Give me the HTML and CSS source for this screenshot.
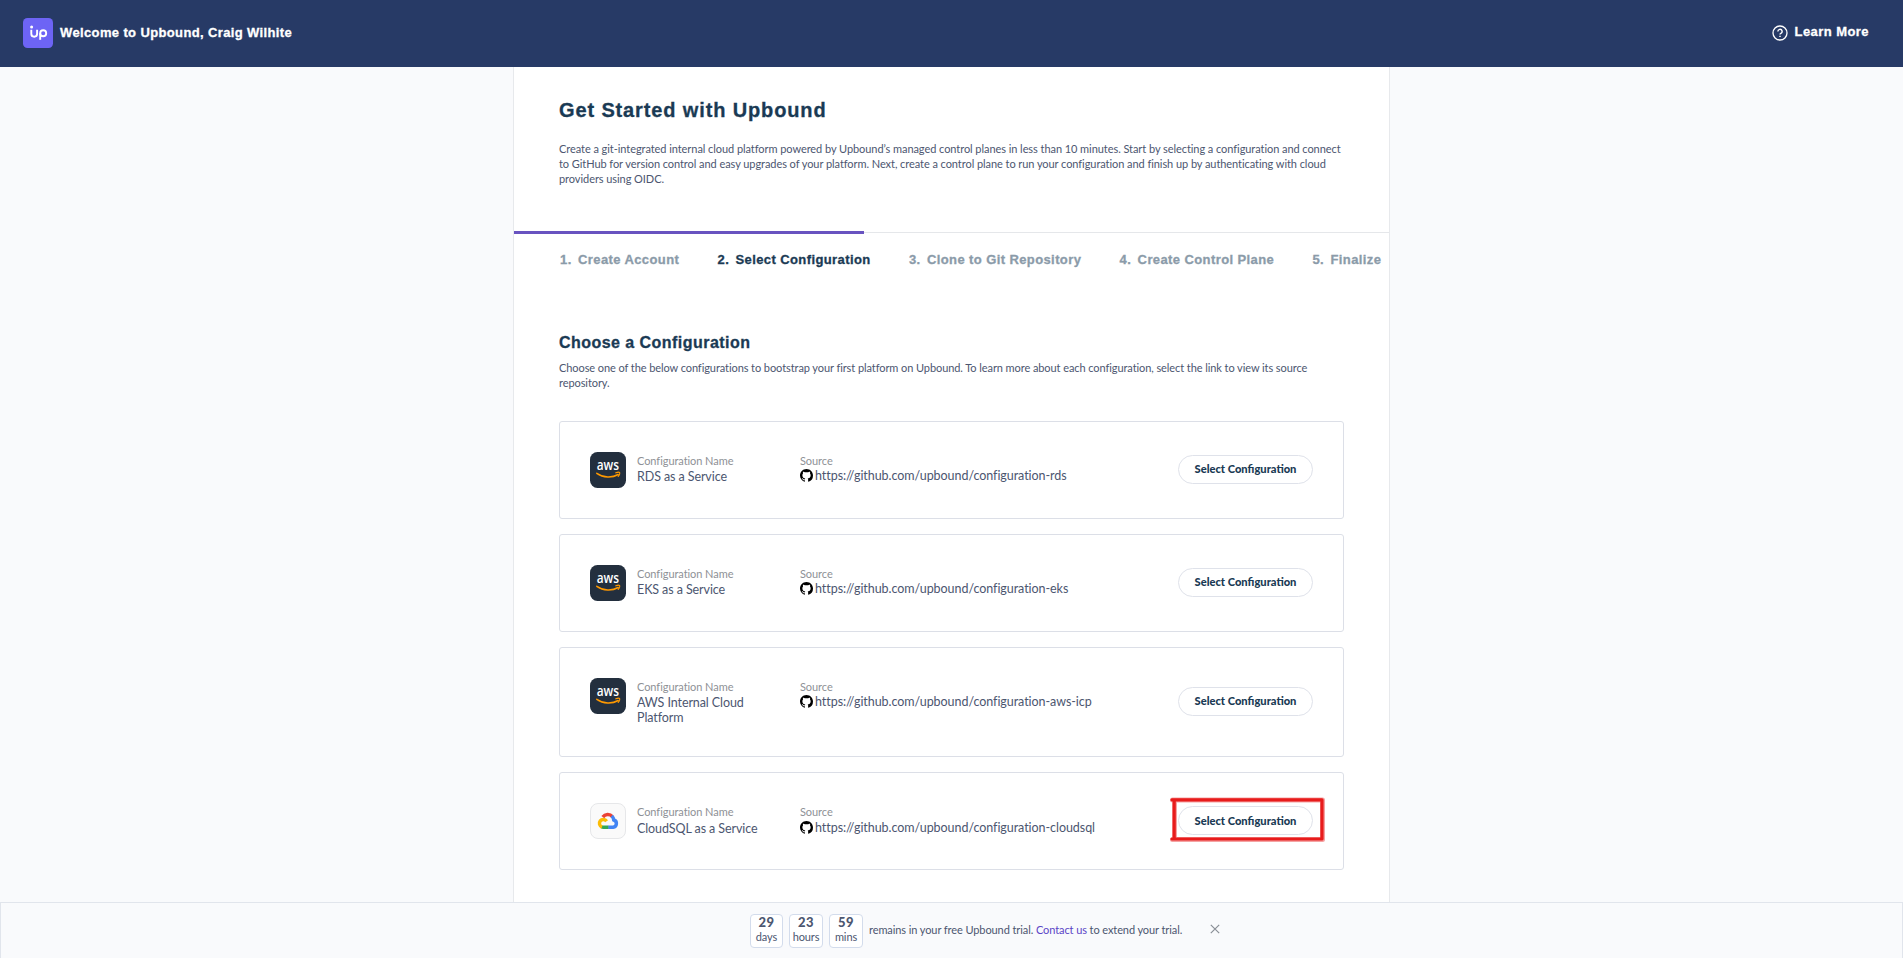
FILE: index.html
```html
<!DOCTYPE html>
<html lang="en">
<head>
<meta charset="utf-8">
<title>Get Started with Upbound</title>
<link rel="stylesheet" href="styles.css">
</head>
<body>
<svg class="defs" width="0" height="0">
  <symbol id="github" viewBox="0 0 16 16"><path d="M8 0C3.58 0 0 3.58 0 8c0 3.54 2.29 6.53 5.47 7.59.4.07.55-.17.55-.38 0-.19-.01-.82-.01-1.49-2.01.37-2.53-.49-2.69-.94-.09-.23-.48-.94-.82-1.13-.28-.15-.68-.52-.01-.53.63-.01 1.08.58 1.23.82.72 1.21 1.87.87 2.33.66.07-.52.28-.87.51-1.07-1.78-.2-3.64-.89-3.64-3.95 0-.87.31-1.59.82-2.15-.08-.2-.36-1.02.08-2.12 0 0 .67-.21 2.2.82.64-.18 1.32-.27 2-.27s1.36.09 2 .27c1.53-1.04 2.2-.82 2.2-.82.44 1.1.16 1.92.08 2.12.51.56.82 1.27.82 2.15 0 3.07-1.87 3.75-3.65 3.95.29.25.54.73.54 1.48 0 1.07-.01 1.93-.01 2.2 0 .21.15.46.55.38A8.01 8.01 0 0 0 16 8c0-4.42-3.58-8-8-8z"/></symbol>
  <symbol id="aws" viewBox="0 0 36 36">
    <rect width="36" height="36" rx="7.5" fill="#232f3e"/>
    <path d="M6.800 21.300c6.500 4.600 15.300 4.700 21.400 1.200" fill="none" stroke="#f90" stroke-width="1.500" stroke-linecap="round"/>
    <path d="M25.800 20.800c1.600-.6 3.400-.7 3.800-.2s-.2 2.500-1.400 3.700" fill="none" stroke="#f90" stroke-width="1.200" stroke-linecap="round"/>
  </symbol>
</svg>

<header class="topbar">
  <div class="brand">
    <svg class="logo" width="30" height="30" viewBox="0 0 30 30">
      <rect width="30" height="30" rx="4.500" fill="#6d64f5"/>
      <g fill="none" stroke="#fff" stroke-width="1.900">
        <path d="M8.300 11.800v4a2.900 2.900 0 0 0 5.800 0v-4"/>
        <path d="M17.200 21.800v-6.600"/><circle cx="20.200" cy="15.300" r="3"/>
      </g>
      <circle cx="8.600" cy="8.900" r="1.500" fill="#fff"/>
    </svg>
    <span class="heavy welcome">Welcome to Upbound, Craig Wilhite</span>
  </div>
  <a class="learn">
    <svg width="16" height="16" viewBox="0 0 16 16" fill="none" stroke="#fff"><circle cx="8" cy="8" r="7" stroke-width="1.300"/><path d="M5.900 6.500a2.100 2.100 0 1 1 3 1.800c-.6.3-.9.600-.9 1.200" stroke-width="1.400"/><path d="M8 10.700v1.300" stroke-width="1.500"/></svg>
    <span class="heavy learn-text">Learn More</span>
  </a>
</header>

<main class="panel">
  <section class="intro">
    <h1 class="heavy">Get Started with Upbound</h1>
    <p class="copy">Create a git-integrated internal cloud platform powered by Upbound’s managed control planes in less than 10 minutes. Start by selecting a configuration and connect<br>to GitHub for version control and easy upgrades of your platform. Next, create a control plane to run your configuration and finish up by authenticating with cloud<br>providers using OIDC.</p>
  </section>
  <div class="progress"><div class="progress-fill"></div></div>
  <ol class="steps heavy">
    <li><span>1.</span>Create Account</li>
    <li class="active"><span>2.</span>Select Configuration</li>
    <li><span>3.</span>Clone to Git Repository</li>
    <li><span>4.</span>Create Control Plane</li>
    <li><span>5.</span>Finalize</li>
  </ol>
  <section class="choose">
    <h2 class="heavy">Choose a Configuration</h2>
    <p class="copy">Choose one of the below configurations to bootstrap your first platform on Upbound. To learn more about each configuration, select the link to view its source<br>repository.</p>
    <div class="cards">
      <article class="card">
        <svg class="icon" viewBox="0 0 36 36"><use href="#aws"/><text x="6.700" y="18.300" class="aws-word" textLength="22.300" lengthAdjust="spacingAndGlyphs">aws</text></svg>
        <div class="name"><small>Configuration Name</small><span>RDS as a Service</span></div>
        <div class="source"><small>Source</small><a><svg class="gh"><use href="#github"/></svg>https://github.com/upbound/configuration-rds</a></div>
        <button>Select Configuration</button>
      </article>
      <article class="card">
        <svg class="icon" viewBox="0 0 36 36"><use href="#aws"/><text x="6.700" y="18.300" class="aws-word" textLength="22.300" lengthAdjust="spacingAndGlyphs">aws</text></svg>
        <div class="name"><small>Configuration Name</small><span>EKS as a Service</span></div>
        <div class="source"><small>Source</small><a><svg class="gh"><use href="#github"/></svg>https://github.com/upbound/configuration-eks</a></div>
        <button>Select Configuration</button>
      </article>
      <article class="card tall">
        <svg class="icon" viewBox="0 0 36 36"><use href="#aws"/><text x="6.700" y="18.300" class="aws-word" textLength="22.300" lengthAdjust="spacingAndGlyphs">aws</text></svg>
        <div class="name"><small>Configuration Name</small><span>AWS Internal Cloud<br>Platform</span></div>
        <div class="source"><small>Source</small><a><svg class="gh"><use href="#github"/></svg>https://github.com/upbound/configuration-aws-icp</a></div>
        <button>Select Configuration</button>
      </article>
      <article class="card last">
        <svg class="icon" viewBox="0 0 36 36">
          <rect x=".5" y=".5" width="35" height="35" rx="7.500" fill="#fafafa" stroke="#e6e7e9"/>
          <g fill="none" stroke-width="3.500">
            <path d="M12.800 14.100a6.200 6.200 0 0 1 9.600-.5" stroke="#ea4335"/>
            <path d="M21.700 13a6 6 0 0 1 2.100 4 3.700 3.700 0 0 1-.7 7.200h-5" stroke="#4285f4"/>
            <path d="M18.300 24.200h-4.800c-.8 0-1.500-.2-2.100-.6" stroke="#34a853"/>
            <path d="M12 24a3.900 3.900 0 1 1 4.600-5.800" stroke="#fbbc05"/>
          </g>
        </svg>
        <div class="name"><small>Configuration Name</small><span>CloudSQL as a Service</span></div>
        <div class="source"><small>Source</small><a><svg class="gh"><use href="#github"/></svg>https://github.com/upbound/configuration-cloudsql</a></div>
        <div class="action"><button>Select Configuration</button>
          <svg class="highlight" width="156" height="46" viewBox="0 0 156 46" fill="none" stroke-linecap="round" stroke-linejoin="round"><path d="M2.500 3H152.500V42.500H2.500M4.500 3V42.500" stroke="#f5a3a3" stroke-width="5"/><path d="M2 2.800H152V42H2M4.200 3V42" stroke="#e81b1b" stroke-width="3.200"/></svg>
        </div>
      </article>
    </div>
  </section>
</main>

<footer class="trial">
  <div class="chips">
    <div class="chip"><b>29</b><span>days</span></div>
    <div class="chip wide"><b>23</b><span>hours</span></div>
    <div class="chip wide"><b>59</b><span>mins</span></div>
  </div>
  <p>remains in your free Upbound trial. <a>Contact us</a> to extend your trial.</p>
  <svg class="close" width="10" height="10" viewBox="0 0 10 10" stroke="#8a8f96" stroke-width="1.200"><path d="M.8.8l8.400 8.400M9.200.8L.8 9.200"/></svg>
</footer>
</body>
</html>
```
FILE: styles.css
```css
* { box-sizing: border-box; }
html, body { height: 100%; }
body {
  margin: 0;
  display: flex;
  flex-direction: column;
  overflow: hidden;
  background: #f9fafc;
  color: #4c5670;
  font-family: Lato, sans-serif;
}
h1, h2, p, ol { margin: 0; padding: 0; white-space: nowrap; }
.defs { position: absolute; }
.heavy {
  font-family: "Liberation Sans", Arial, sans-serif;
  font-weight: 700;
  -webkit-text-stroke: .3px currentColor;
}

.topbar {
  flex: 0 0 67px;
  display: flex;
  justify-content: space-between;
  padding: 0 34px 0 23px;
  background: #273a66;
  color: #fff;
}
.brand, .learn { display: flex; align-items: center; }
.brand { gap: 7px; padding-bottom: 1px; }
.welcome { margin-bottom: 2px; font-size: 13px; letter-spacing: .37px; }
.learn { gap: 7px; }
.learn svg { margin-bottom: 1px; }
.learn-text { font-size: 13px; letter-spacing: .44px; margin-bottom: 5px; }

.panel {
  flex: 1;
  min-height: 0;
  width: 877px;
  margin: 0 auto;
  border: solid #e7e9ec;
  border-width: 0 1px;
  background: #fff;
}
.intro { padding: 31px 45px 0; height: 164px; }
h1 { font-size: 20px; line-height: 24px; letter-spacing: .87px; color: #1a3a54; -webkit-text-stroke-width: .75px; }
.copy { font-size: 11px; line-height: 15px; letter-spacing: -.07px; }
.intro .copy { margin-top: 19px; letter-spacing: -.062px; }
.progress { height: 3px; background: linear-gradient(#e5e7ea, #e5e7ea) 0 1px / 100% 1px no-repeat; }
.progress-fill { width: 350px; height: 3px; background: #6853c0; }

.steps {
  display: flex;
  gap: 38.300px;
  height: 94px;
  padding: 18px 0 0 46px;
  list-style: none;
  font-size: 13px;
  line-height: 16px;
  letter-spacing: .4px;
  color: #8b9ba9;
}
.steps span { display: inline-block; width: 18px; }
.steps .active { color: #1a3a54; }

.choose { padding: 0 45px; }
h2 { padding-top: 5px; font-size: 16px; line-height: 20px; letter-spacing: .46px; color: #1a3a54; -webkit-text-stroke-width: .55px; }
.choose .copy { margin-top: 7px; letter-spacing: -.08px; }
.cards { display: flex; flex-direction: column; gap: 15px; margin-top: 31px; }
.card {
  display: flex;
  align-items: flex-start;
  width: 785px;
  height: 98px;
  padding: 30px;
  border: 1px solid #dcdfe7;
  border-radius: 3px;
}
.tall { height: 110px; }
.icon { flex: none; width: 36px; height: 36px; }
.aws-word { font: 600 14px "Open Sans", sans-serif; fill: #fff; }
.name, .source { display: flex; flex-direction: column; padding-top: 1px; white-space: nowrap; }
.name { width: 163px; margin-left: 11px; }
.source { flex: 1; }
.card small { font-size: 11px; line-height: 15px; letter-spacing: -.06px; color: #8e9196; }
.name span { padding-top: 1px; font-size: 12.500px; line-height: 15px; letter-spacing: -.09px; }
.source a { display: flex; align-items: center; gap: 2px; height: 15px; font-size: 12.500px; letter-spacing: -.055px; }
.last .name span, .last .source a { margin-top: 1px; }
.gh { width: 13px; height: 13px; fill: #000; }
button {
  align-self: center;
  width: 135px;
  height: 29px;
  margin-bottom: 2px;
  padding: 0 0 1px;
  border: 1px solid #dfe2ea;
  border-radius: 15px;
  background: #fff;
  color: #1a3a54;
  font: 900 11.150px/15px Lato, sans-serif;
}
.action { position: relative; align-self: center; display: flex; }
.last button { margin-bottom: 1px; }
.highlight { position: absolute; left: -8px; top: -9px; }

.trial {
  flex: 0 0 56px;
  display: flex;
  padding: 11px 0 0 749px;
  border: 1px solid #e1e5ec;
  border-bottom: 0;
  background: #f9fafc;
}
.chips { display: flex; gap: 6px; }
.chip {
  display: flex;
  flex-direction: column;
  align-items: center;
  width: 33px;
  height: 34px;
  border: 1px solid #d3dcec;
  border-radius: 4px;
  background: #fff;
}
.wide { width: 34px; }
.chip b { font: 900 13px/15px Lato, sans-serif; letter-spacing: .4px; }
.chip span { font-size: 11px; line-height: 13px; letter-spacing: -.1px; }
.trial p { margin-left: 6px; font-size: 11px; line-height: 15px; letter-spacing: -.09px; padding-top: 8px; }
.trial a { color: #5b45c7; }
.close { margin: 10px 0 0 28px; }
```
